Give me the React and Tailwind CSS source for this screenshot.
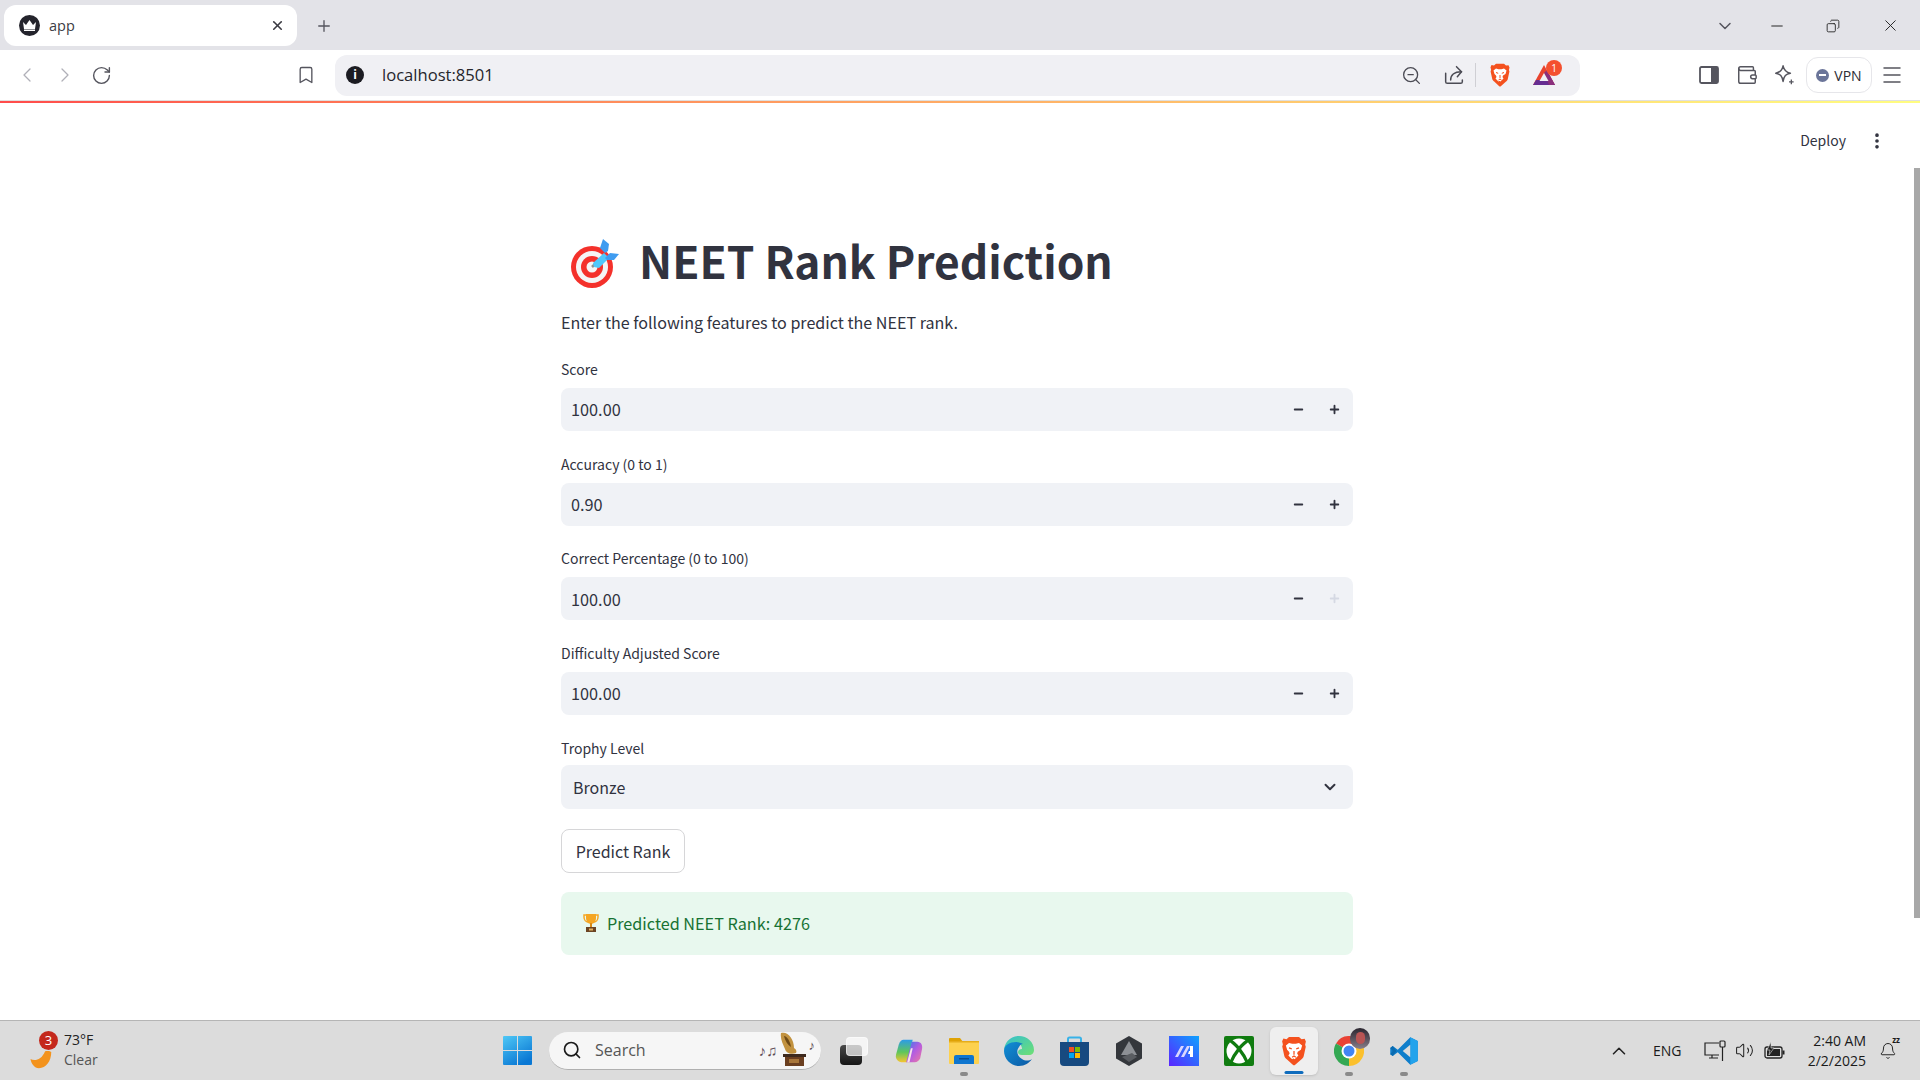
import React from 'react';
import { ChevronLeft, ChevronRight, RotateCw, Bookmark, X, Plus, Minus, ChevronDown, ZoomOut, Wallet, Menu, Copy, Search, ChevronUp, Volume2, Bell, MoreVertical } from 'lucide-react';

const st = '"Noto Sans CJK SC", "Noto Sans", sans-serif';
const ui = '"Open Sans", "Noto Sans", sans-serif';

const BraveIcon = ({ size = 24 }) => (
  <svg width={size} height={size} viewBox="0 0 24 24">
    <path d="M6 2.5L8 .8h8l2 1.7 2.5-.3 1 2.2-.6 2.6.5 1.6-1.6 7.4c-.4 1.4-1 2-2 2.7L12.5 23.4h-1L6.200 18.500c-1-.7-1.600-1.300-2-2.700L2.600 8.400l.5-1.600-.6-2.600 1-2.200z" fill="#f4511e" />
    <path d="M5.500 7.500L8 5.500l2.500.7h3l2.500-.7 2.500 2-1 3.500-2.500 1.500-.5 1.500 1 1.500-3 3-.8-.6h-.4l-.8.6-3-3 1-1.500-.5-1.500L6.500 11z" fill="#fff" />
    <path d="M8 9.500l2.200.8M16 9.500l-2.200.8M12 12v3M10.500 17l1.500-1 1.500 1" stroke="#f4511e" strokeWidth="1" fill="none" />
  </svg>
);

const TargetEmoji = () => (
  <svg width="56" height="56" viewBox="0 0 56 56" className="ml-[4px] shrink-0">
    <circle cx="27" cy="33" r="21" fill="#f4312b" />
    <circle cx="27" cy="33" r="16" fill="#f5f5f5" />
    <circle cx="27" cy="33" r="11" fill="#f4312b" />
    <circle cx="27" cy="33" r="5.500" fill="#f5f5f5" />
    <path d="M27 33l4-4" stroke="#909090" strokeWidth="2.500" />
    <path d="M28 29l11-10 5 5-10 10-5-1z" fill="#4fc8fb" />
    <path d="M38 5l6 5-1 7-3 2-5-5z" fill="#3f9cf0" />
    <path d="M54 20l-5 6-7 0-2-2 5-5z" fill="#3f9cf0" />
  </svg>
);

const TrophyEmoji = () => (
  <svg width="18" height="20" viewBox="0 0 18 20">
    <path d="M2 2h14v2c0 3-2 5-4 5H6C4 9 2 7 2 4z" fill="none" stroke="#f5a623" strokeWidth="1.500" />
    <path d="M4 1h10v4c0 3-2 6-5 6S4 8 4 5z" fill="#f5a623" />
    <rect x="8" y="10" width="2" height="4" fill="#d98a14" />
    <rect x="4" y="14" width="10" height="5" fill="#6b4423" />
    <rect x="7" y="15.500" width="4" height="2" fill="#e0b060" />
  </svg>
);

// streamlit number input
const NumberField = ({ label, value, plusOff }) => (
  <div className="flex flex-col">
    <label className="text-[14px] leading-[22px] text-[#31333f] mb-[8px]">{label}</label>
    <div className="h-[43px] bg-[#f0f2f6] rounded-lg flex items-center pl-[10px] pr-[1px] text-[16.3px] text-[#31333f]">
      <span className="flex-1">{value}</span>
      <div className="w-[36px] flex justify-center"><Minus size={13} strokeWidth={3.4} color="#31333f" /></div>
      <div className="w-[36px] flex justify-center"><Plus size={13} strokeWidth={3.4} color={plusOff ? '#d5d9e3' : '#31333f'} /></div>
    </div>
  </div>
);

const TaskIcon = ({ children, active, dot }) => (
  <div className={`relative w-[48px] h-[48px] rounded-md flex items-center justify-center ${active ? 'bg-[#efefef] shadow-sm' : ''}`}>
    {children}
    {dot && <span className="absolute bottom-[-1px] left-1/2 -translate-x-1/2 w-[8px] h-[4px] rounded-full bg-[#8a8a8a]" />}
    {active && <span className="absolute bottom-[1px] left-1/2 -translate-x-1/2 w-[19px] h-[3px] rounded-full bg-[#0f6cbd]" />}
  </div>
);

const Browser = () => (
  <>
    {/* Tabs */}
    <div className="h-[50px] shrink-0 bg-[#e3e3e8] flex items-end pl-[4px]">
      <div className="w-[293px] h-[41px] mb-[4px] bg-white rounded-xl flex items-center pl-[15px] pr-[12px]">
        <div className="w-[21px] h-[21px] rounded-full bg-[#24242c] flex items-center justify-center">
          <svg width="13" height="11" viewBox="0 0 13 11"><path d="M0 2l3 3 3.500-5L10 5l3-3-1 7H1z M1 9.500h11V11H1z" fill="#fff" /></svg>
        </div>
        <span className="ml-[9px] flex-1 text-[14.5px] text-[#3c3c44]">app</span>
        <X size={15} strokeWidth={2.6} color="#3a3a42" />
      </div>
      <div className="w-[54px] h-[41px] mb-[4px] flex items-center justify-center"><Plus size={18} strokeWidth={1.8} color="#55555e" /></div>
      <div className="flex-1" />
      <div className="h-[41px] mb-[4px] flex items-center pr-[20px]">
        <ChevronDown size={20} strokeWidth={1.8} color="#55555e" className="mr-[33px]" />
        <Minus size={18} strokeWidth={1.3} color="#222" className="mr-[40px]" />
        <Copy size={14} strokeWidth={1.5} color="#222" className="mr-[41px] -scale-x-100" />
        <X size={19} strokeWidth={1.2} color="#222" />
      </div>
    </div>
    {/* Toolbar */}
    <div className="h-[50px] shrink-0 bg-white flex items-center pl-[15px]">
      <ChevronLeft size={24} strokeWidth={1.3} color="#b0b0b8" className="mr-[14px]" />
      <ChevronRight size={24} strokeWidth={1.3} color="#b0b0b8" className="mr-[14px]" />
      <RotateCw size={21} strokeWidth={1.6} color="#55555e" className="mr-[184px]" />
      <Bookmark size={20} strokeWidth={1.6} color="#55555e" className="mr-[19px]" />
      <div className="w-[1245px] h-[41px] bg-[#f0f0f4] rounded-xl flex items-center pl-[11px] pr-[24px]">
        <div className="w-[18px] h-[18px] rounded-full bg-[#1c1c22] flex items-center justify-center text-white text-[12px] font-bold">i</div>
        <span className="ml-[18px] flex-1 text-[16.6px] text-[#26262c]">localhost:8501</span>
        <ZoomOut size={21} strokeWidth={1.5} color="#4b4b54" className="mr-[22px]" />
        <svg width="20" height="20" viewBox="0 0 24 24" fill="none" stroke="#4b4b54" strokeWidth="1.800" strokeLinecap="round" strokeLinejoin="round" className="mr-[11px]">
          <path d="M2 10v10a2 2 0 0 0 2 2h16a2 2 0 0 0 2-2v-2" />
          <path d="M8 18c0-6 4-10 13-10" />
          <path d="M15 2l6 6-5 6" />
        </svg>
        <div className="w-px h-[24px] bg-[#cfcfd4] mr-[12px]" />
        <BraveIcon size={24} />
        <div className="relative ml-[20px]">
          <svg width="24" height="24" viewBox="0 0 24 24">
            <path d="M12 2L23 22H1z" fill="#e8432e" />
            <path d="M1 22h22l-3-5H4z" fill="#662d91" />
            <path d="M17 22l-5-12 3-3 8 15z" fill="#8a2f7c" />
            <path d="M12 10l4.500 8h-9z" fill="#f0f0f4" />
          </svg>
          <span className="absolute -top-[3px] -right-[6px] w-[16px] h-[16px] rounded-full bg-[#f4502f] text-white text-[10px] leading-[16px] text-center">1</span>
        </div>
      </div>
      <svg width="22" height="22" viewBox="0 0 22 22" className="ml-[118px]">
        <rect x="2" y="3" width="18" height="16" rx="1.500" fill="none" stroke="#55555e" strokeWidth="1.800" />
        <rect x="13" y="3" width="7" height="16" fill="#55555e" />
      </svg>
      <Wallet size={22} strokeWidth={1.6} color="#55555e" className="ml-[16px]" />
      <svg width="22" height="22" viewBox="0 0 24 24" fill="none" stroke="#55555e" strokeWidth="1.600" strokeLinejoin="round" className="ml-[15px]">
        <path d="M11 2c1 5 3 7 8 8-5 1-7 3-8 9-1-6-3-8-8-9 5-1 7-3 8-8z" />
        <path d="M20 17v5M17.500 19.500h5" strokeWidth="1.400" />
      </svg>
      <div className="ml-[11px] w-[66px] h-[36px] rounded-xl border border-[#e6e6ea] flex items-center justify-center">
        <div className="w-[13px] h-[13px] rounded-full bg-[#6b7599] flex items-center justify-center"><div className="w-[7px] h-[2px] bg-white" /></div>
        <span className="ml-[5px] text-[14px] text-[#2c2c34]">VPN</span>
      </div>
      <Menu size={24} strokeWidth={1.5} color="#55555e" className="ml-[8px]" />
    </div>
  </>
);

const TaskView = () => (
  <div className="relative w-[48px] h-[48px]">
    <div className="absolute left-[10px] top-[18px] w-[22px] h-[20px] bg-gradient-to-b from-[#4a4a4a] to-[#161616] rounded-sm" />
    <div className="absolute left-[16px] top-[10px] w-[22px] h-[19px] bg-white/70 border border-white/50 rounded-sm" />
  </div>
);

const Copilot = () => (
  <svg width="28" height="26" viewBox="0 0 30 28">
    <defs>
      <linearGradient id="cpL" x1="0" y1="0" x2="0" y2="1"><stop offset="0" stopColor="#2c9be8" /><stop offset="0.55" stopColor="#5fc65a" /><stop offset="1" stopColor="#f6c531" /></linearGradient>
      <linearGradient id="cpR" x1="0" y1="0" x2="1" y2="1"><stop offset="0" stopColor="#2f7bee" /><stop offset="0.5" stopColor="#b45ce0" /><stop offset="1" stopColor="#f07aa0" /></linearGradient>
    </defs>
    <path d="M9 2h10l-6 24H7C3 26 0 22 1 18l3-11c1-3 3-5 5-5z" fill="url(#cpL)" />
    <path d="M12 26h9c3 0 5-2 6-4l2-10c1-4-1-8-5-8h-6z" fill="url(#cpR)" />
    <path d="M17 11l-4 15 2.500 0 3.500-15z" fill="#f8e4e8" />
  </svg>
);

const Folder = () => (
  <svg width="30" height="28" viewBox="0 0 30 28">
    <path d="M0 2a1 1 0 0 1 1-1h10l3 4H0z" fill="#dfa204" />
    <rect x="0" y="4" width="30" height="23" rx="1" fill="#fdd14f" />
    <rect x="0" y="4" width="30" height="1.500" fill="#e6ad1b" />
    <path d="M5 27v-7a2 2 0 0 1 2-2h16a2 2 0 0 1 2 2v7z" fill="#0f76cf" />
    <rect x="10" y="21" width="10" height="1.500" fill="#0a4f8f" />
  </svg>
);

const Edge = () => (
  <svg width="30" height="30" viewBox="0 0 30 30">
    <defs>
      <linearGradient id="edA" x1="0" y1="0" x2="1" y2="1"><stop offset="0" stopColor="#33bfd0" /><stop offset="1" stopColor="#6fe073" /></linearGradient>
      <linearGradient id="edB" x1="0" y1="0" x2="1" y2="1"><stop offset="0" stopColor="#118fd6" /><stop offset="1" stopColor="#0c59a4" /></linearGradient>
    </defs>
    <path d="M15 0C23 0 30 6 30 14c0 3-2 5-5 5h-7c-3 0-4-1-4-3s2-3 4-3c0-4-3-6-6-6S1 9 0 15C0 7 6 0 15 0z" fill="url(#edA)" />
    <path d="M0 15c0 8 7 15 15 15 6 0 10-3 13-7-3 2-7 2-10 0-5-3-6-8-3-12 1-2 2-3 4-3-2-1-4-2-7-2C6 6 0 9 0 15z" fill="url(#edB)" />
  </svg>
);

const Store = () => (
  <svg width="29" height="30" viewBox="0 0 29 30">
    <path d="M8 8V3a1.500 1.500 0 0 1 1.500-1.500h10A1.500 1.500 0 0 1 21 3v5" fill="none" stroke="#38b2e8" strokeWidth="2" />
    <path d="M0 6h29v20a4 4 0 0 1-4 4H4a4 4 0 0 1-4-4z" fill="#174a80" />
    <rect x="9" y="11" width="5" height="5" fill="#f25022" />
    <rect x="15" y="11" width="5" height="5" fill="#7fba00" />
    <rect x="9" y="17" width="5" height="5" fill="#00a4ef" />
    <rect x="15" y="17" width="5" height="5" fill="#ffb900" />
  </svg>
);

const Hexagon = () => (
  <svg width="26" height="30" viewBox="0 0 26 30">
    <path d="M13 0l13 7.500v15L13 30 0 22.500v-15z" fill="#34373c" />
    <path d="M13 5l8 14H5z" fill="#8d9095" />
    <path d="M6 21l10-4 5 4-8 5z" fill="#5a5d62" />
  </svg>
);

const BlueA = () => (
  <svg width="30" height="30" viewBox="0 0 30 30">
    <defs><linearGradient id="baG" x1="1" y1="0" x2="0" y2="1"><stop offset="0" stopColor="#0ea2ff" /><stop offset="1" stopColor="#5a24ff" /></linearGradient></defs>
    <rect width="30" height="30" fill="url(#baG)" />
    <path d="M6 21l6-11h3l-6 11zM12 21l6-11h3l-6 11z" fill="#d9d6ff" />
    <path d="M21 10h3v11h-3v-3h-2l1-3h1z" fill="#fff" />
  </svg>
);

const Xbox = () => (
  <svg width="30" height="30" viewBox="0 0 30 30">
    <rect width="30" height="30" rx="2" fill="#107c10" />
    <circle cx="15" cy="15" r="12.500" fill="#fff" />
    <path d="M5 4C11 7 19 16 24 28M25 4C19 7 11 16 6 28" fill="none" stroke="#107c10" strokeWidth="3.200" />
  </svg>
);

const Chrome = () => (
  <div className="relative">
    <svg width="30" height="30" viewBox="0 0 30 30">
      <path d="M15 15L2 7.500A15 15 0 0 1 28 7.500z" fill="#e94235" />
      <path d="M15 15L28 7.500A15 15 0 0 1 15 30z" fill="#fbc02d" />
      <path d="M15 15L15 30A15 15 0 0 1 2 7.500z" fill="#34a853" />
      <circle cx="15" cy="15" r="7.500" fill="#fff" />
      <circle cx="15" cy="15" r="5.500" fill="#4285f4" />
    </svg>
    <div className="absolute -right-[6px] -top-[8px] w-[20px] h-[21px] rounded-full bg-gradient-to-b from-[#2b2630] to-[#8a7f8a] flex items-center justify-center">
      <div className="w-[9px] h-[12px] rounded-full bg-[#b85454]" />
    </div>
  </div>
);

const VSCode = () => (
  <svg width="30" height="30" viewBox="0 0 24 24">
    <path d="M17 1l6 3v16l-6 3L7 13l-4 3-2-1.500V9.500L3 8l4 3z" fill="#0f7ecb" />
    <path d="M17 1l6 3v16l-6 3z" fill="#23a3ec" />
    <path d="M17 7l-6 5 6 5z" fill="#dcdcdc" />
    <path d="M1 9.500L3 8l3 4-3 4-2-1.500L3 12z" fill="#0a6bb0" />
  </svg>
);

const Taskbar = () => (
  <div className="h-[60px] shrink-0 bg-[#dcdcdc] border-t border-[#b5b5b5] flex items-center pl-[27px]">
    {/* Weather */}
    <div className="w-[476px] flex items-center">
      <div className="relative w-[37px] h-[40px]">
        <svg width="27" height="20" viewBox="0 0 28 26" className="absolute left-0 top-[18px]">
          <path d="M1 13c5 3 14 2 19-10 4-1 7 0 8 1 0 12-7 21-16 21C6 25 2 19 1 13z" fill="#f3931d" />
        </svg>
        <span className="absolute left-[12px] top-[0px] w-[19px] h-[19px] rounded-full bg-[#c4281c] text-white text-[13px] leading-[19px] text-center">3</span>
      </div>
      <div className="text-[14px] leading-[20px] text-[#222] -mt-[2px]">
        <div>73°F</div>
        <div className="text-[#555]">Clear</div>
      </div>
    </div>
    <svg width="29" height="29" viewBox="0 0 29 29" className="shrink-0">
      <defs><linearGradient id="wnG" x1="0" y1="0" x2="0.6" y2="1"><stop offset="0" stopColor="#4fc8f6" /><stop offset="1" stopColor="#0a78d4" /></linearGradient></defs>
      <path d="M0 1a1 1 0 0 1 1-1h13v14H0zM15 0h13a1 1 0 0 1 1 1v13H15zM0 15h14v14H1a1 1 0 0 1-1-1zM15 15h14v13a1 1 0 0 1-1 1H15z" fill="url(#wnG)" />
    </svg>
    {/* Search */}
    <div className="ml-[17px] w-[272px] h-[38px] rounded-full bg-[#f6f6f6] border-b border-[#b0b0b0] flex items-center pl-[13px] shrink-0">
      <Search size={20} strokeWidth={2} color="#1a1a1a" />
      <span className="ml-[13px] flex-1 text-[16px] text-[#555]">Search</span>
      <span className="text-[15px] text-[#5c4a52] -mr-[1px]">♪♫</span>
      <svg width="32" height="36" viewBox="0 0 32 36">
        <path d="M4 1c7-2 13 6 13 15 2 1 3 3 2 5-5 2-10 0-11-4C6 12 3 7 4 1z" fill="#c2923f" />
        <path d="M7 4c3 0 6 5 7 11-3-2-6-6-7-11z" fill="#6e4a16" />
        <rect x="8" y="25" width="19" height="9" fill="#6b3f20" />
        <rect x="6" y="22" width="23" height="3" fill="#3e2a1e" />
        <rect x="12" y="27" width="10" height="4" fill="#a8763a" />
      </svg>
      <span className="text-[13px] text-[#5c4a52] mb-[8px] mr-[6px]">♪</span>
    </div>
    {/* Pinned apps */}
    <div className="ml-[9px] flex gap-[7px] shrink-0">
      <TaskIcon><TaskView /></TaskIcon>
      <TaskIcon><Copilot /></TaskIcon>
      <TaskIcon dot><Folder /></TaskIcon>
      <TaskIcon><Edge /></TaskIcon>
      <TaskIcon><Store /></TaskIcon>
      <TaskIcon><Hexagon /></TaskIcon>
      <TaskIcon><BlueA /></TaskIcon>
      <TaskIcon><Xbox /></TaskIcon>
      <TaskIcon active><BraveIcon size={30} /></TaskIcon>
      <TaskIcon dot><Chrome /></TaskIcon>
      <TaskIcon dot><VSCode /></TaskIcon>
    </div>
    {/* Tray */}
    <div className="flex items-center ml-[180px] shrink-0 text-[#1a1a1a]">
      <ChevronUp size={22} strokeWidth={1.7} color="#222" />
      <span className="ml-[23px] text-[14px] w-[30px]">ENG</span>
      <svg width="22" height="24" viewBox="0 0 22 24" fill="none" stroke="#222" strokeWidth="1.200" className="ml-[21px]">
        <path d="M15 4H1v12h14" />
        <path d="M5 19h9M8 16v3" />
        <rect x="16" y="2" width="5" height="6" rx="1" />
        <path d="M18.500 8v14" />
      </svg>
      <Volume2 size={19} strokeWidth={1.3} color="#222" className="ml-[9px]" />
      <svg width="21" height="18" viewBox="0 0 21 18" className="ml-[10px]">
        <rect x="1" y="5" width="17" height="11" rx="2" fill="none" stroke="#222" strokeWidth="1.300" />
        <rect x="3" y="7" width="13" height="7" fill="#222" />
        <rect x="18.500" y="8.500" width="2" height="4" fill="#222" />
        <path d="M7 0L3 8h3l-1 5 5-7H7z" fill="#222" stroke="#dcdcdc" strokeWidth="0.600" />
      </svg>
      <div className="ml-[21px] w-[60px] text-right text-[14px] leading-[20px] whitespace-nowrap flex flex-col items-end">
        <div>2:40 AM</div>
        <div>2/2/2025</div>
      </div>
      <div className="relative ml-[13px]">
        <Bell size={18} strokeWidth={1.3} color="#222" />
        <span className="absolute -top-[6px] -right-[3px] text-[8px] leading-none font-bold">zz</span>
      </div>
    </div>
  </div>
);

export default function App() {
  return (
    <div className="h-screen w-screen overflow-hidden flex flex-col bg-white" style={{ fontFamily: ui }}>
      <Browser />
      <div className="h-[3px] shrink-0 border-t border-[#e0e0e0] bg-gradient-to-r from-[#ff4b4b] to-[#fffd80]" />
      <main className="flex-1 relative" style={{ fontFamily: st }}>
        {/* streamlit header */}
        <div className="absolute right-[33px] top-[27px] flex items-center">
          <span className="text-[14px] text-[#31333f] mr-[21px]">Deploy</span>
          <MoreVertical size={20} strokeWidth={2.4} color="#31333f" />
        </div>
        {/* scrollbar */}
        <div className="absolute right-0 top-[65px] w-[6px] h-[750px] bg-[#a8a8a8]" />

        <div className="w-[792px] ml-[561px] pt-[124px]">
          <div className="flex items-center h-[70px]">
            <TargetEmoji />
            <h1 className="ml-[18px] -mt-[3px] text-[44.3px] font-bold text-[#31333f] leading-none">NEET Rank Prediction</h1>
          </div>
          <p className="mt-[12px] text-[16.1px] leading-[26px] text-[#31333f] mb-[23px]">Enter the following features to predict the NEET rank.</p>
          <div className="flex flex-col gap-[21.67px]">
            <NumberField label="Score" value="100.00" />
            <NumberField label="Accuracy (0 to 1)" value="0.90" />
            <NumberField label="Correct Percentage (0 to 100)" value="100.00" plusOff />
            <NumberField label="Difficulty Adjusted Score" value="100.00" />
            <div className="flex flex-col">
              <label className="text-[14px] leading-[22px] text-[#31333f] mb-[6px]">Trophy Level</label>
              <div className="h-[44px] bg-[#f0f2f6] rounded-lg flex items-center pl-[12px] pr-[14px] text-[16px] text-[#31333f]">
                <span className="flex-1">Bronze</span>
                <ChevronDown size={18} strokeWidth={2.6} color="#31333f" />
              </div>
            </div>
          </div>
          <button className="mt-[20px] block w-[124px] h-[44px] bg-white border border-[#d6d6d8] rounded-lg text-[16px] text-[#31333f]">Predict Rank</button>
          <div className="mt-[19px] h-[63px] rounded-lg bg-[#e8f8ee] flex items-center pl-[21px] text-[16.2px] text-[#177233]">
            <TrophyEmoji />
            <span className="ml-[7px]">Predicted NEET Rank: 4276</span>
          </div>
        </div>
      </main>
      <Taskbar />
    </div>
  );
}
